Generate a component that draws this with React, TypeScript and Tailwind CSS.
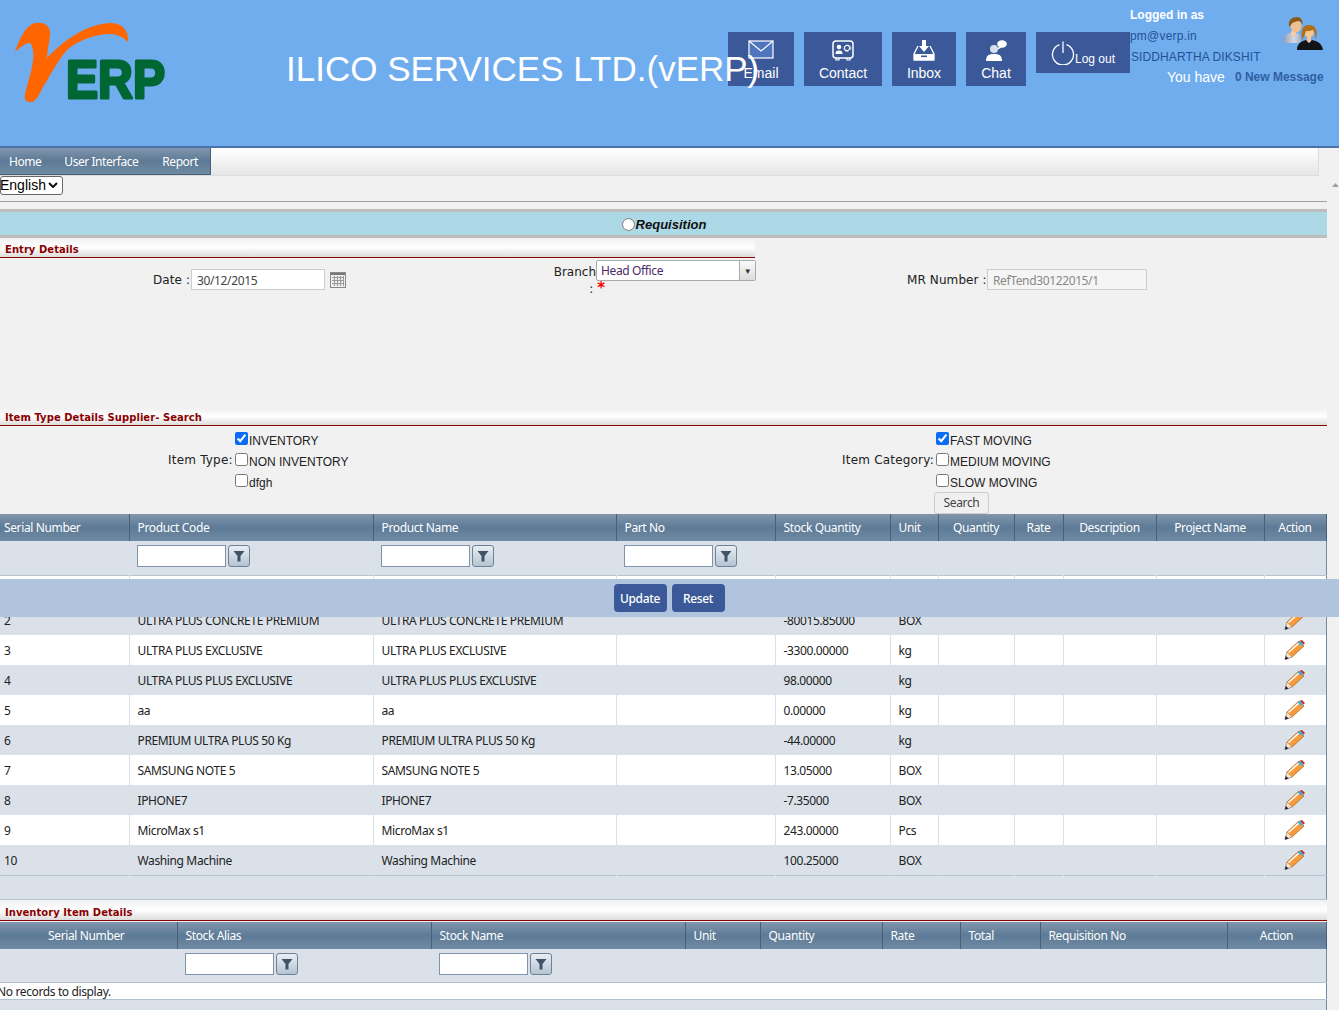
import type { ReactNode } from "react";

const rows = [
  ["1", "", "", "", ""],
  ["2", "ULTRA PLUS CONCRETE PREMIUM", "ULTRA PLUS CONCRETE PREMIUM", "-80015.85000", "BOX"],
  ["3", "ULTRA PLUS EXCLUSIVE", "ULTRA PLUS EXCLUSIVE", "-3300.00000", "kg"],
  ["4", "ULTRA PLUS PLUS EXCLUSIVE", "ULTRA PLUS PLUS EXCLUSIVE", "98.00000", "kg"],
  ["5", "aa", "aa", "0.00000", "kg"],
  ["6", "PREMIUM ULTRA PLUS 50 Kg", "PREMIUM ULTRA PLUS 50 Kg", "-44.00000", "kg"],
  ["7", "SAMSUNG NOTE 5", "SAMSUNG NOTE 5", "13.05000", "BOX"],
  ["8", "IPHONE7", "IPHONE7", "-7.35000", "BOX"],
  ["9", "MicroMax s1", "MicroMax s1", "243.00000", "Pcs"],
  ["10", "Washing Machine", "Washing Machine", "100.25000", "BOX"],
];

const topCols = [
  { label: "Serial Number", w: "w-[129px]", cls: "pl-[4px] text-left" },
  { label: "Product Code", w: "w-[244px]", cls: "pl-[8px] text-left" },
  { label: "Product Name", w: "w-[243px]", cls: "pl-[8px] text-left" },
  { label: "Part No", w: "w-[159px]", cls: "pl-[8px] text-left" },
  { label: "Stock Quantity", w: "w-[115px]", cls: "pl-[8px] text-left" },
  { label: "Unit", w: "w-[48px]", cls: "pl-[8px] text-left" },
  { label: "Quantity", w: "w-[76px]", cls: "text-center" },
  { label: "Rate", w: "w-[49px]", cls: "text-center" },
  { label: "Description", w: "w-[93px]", cls: "text-center" },
  { label: "Project Name", w: "w-[108px]", cls: "text-center" },
  { label: "Action", w: "w-[62px]", cls: "text-center" },
];

const bottomCols = [
  { label: "Serial Number", w: "w-[177px]", cls: "pr-[4px] text-center" },
  { label: "Stock Alias", w: "w-[254px]", cls: "pl-[8px] text-left" },
  { label: "Stock Name", w: "w-[254px]", cls: "pl-[8px] text-left" },
  { label: "Unit", w: "w-[75px]", cls: "pl-[8px] text-left" },
  { label: "Quantity", w: "w-[122px]", cls: "pl-[8px] text-left" },
  { label: "Rate", w: "w-[78px]", cls: "pl-[8px] text-left" },
  { label: "Total", w: "w-[80px]", cls: "pl-[8px] text-left" },
  { label: "Requisition No", w: "w-[187px]", cls: "pl-[8px] text-left" },
  { label: "Action", w: "w-[99px]", cls: "text-center" },
];

const Logo = () => (
  <svg width="156" height="92" viewBox="0 0 156 92" className="block">
    <path
      d="M1 30 C5 18 12 2 22 1 C30 0 37 3 36 14 C35 22 33 30 33 36 C46 22 70 2 96 1 C108 1 115 8 114 20 C106 12 96 11 86 13 C70 16 60 22 53 28 C44 38 36 54 29 65 C25 73 22 80 17 80 C12 80 10 78 11 72 C14 58 21 42 19 28 C18 22 16 20 14 21 C9 23 5 26 1 30Z"
      fill="#ff6600"
    />
    <text x="52" y="76" fill="#006633" stroke="#006633" strokeWidth="3" strokeLinejoin="round" fontSize="54" fontWeight="700" fontFamily="'Liberation Sans', sans-serif" textLength="99" lengthAdjust="spacingAndGlyphs">
      ERP
    </text>
  </svg>
);

const IconMail = () => (
  <svg width="26" height="20" viewBox="0 0 26 20" className="block">
    <rect x="1" y="1" width="24" height="17" fill="#4f76bd" stroke="#fff" strokeWidth="1.2" />
    <path d="M1 1 L13 11 L25 1" fill="none" stroke="#fff" strokeWidth="1.2" />
  </svg>
);

const IconContact = () => (
  <svg width="22" height="21" viewBox="0 0 22 21" className="block">
    <rect x="1" y="1" width="20" height="17" rx="3" fill="none" stroke="#fff" strokeWidth="1.5" />
    <path d="M4 18v2h3v-2M15 18v2h3v-2" fill="none" stroke="#fff" strokeWidth="1.2" />
    <circle cx="7" cy="7" r="2.3" fill="#fff" />
    <path d="M3.5 14c0-3 1.5-3.5 3.5-3.5s3.5.5 3.5 3.5z" fill="#fff" />
    <circle cx="15" cy="8" r="2.6" fill="none" stroke="#fff" />
    <path d="M17.6 8v1.5c1 .5 1.4-.5 1.2-2-.5-3-6-3.5-6.6.5-.4 3 2.5 4 4.5 3" fill="none" stroke="#fff" strokeWidth=".8" />
  </svg>
);

const IconInbox = () => (
  <svg width="22" height="21" viewBox="0 0 22 21" className="block">
    <path d="M5 6 L1 14 V20 H21 V14 L17 6" fill="none" stroke="#fff" strokeWidth="1.3" />
    <path d="M1 14 H21 V20 H1Z" fill="#fff" />
    <rect x="8" y="15.5" width="6" height="1.6" fill="#3b5998" />
    <path d="M9 0h4v6h3l-5 6-5-6h3z" fill="#fff" />
  </svg>
);

const IconChat = () => (
  <svg width="21" height="21" viewBox="0 0 21 21" className="block">
    <circle cx="8" cy="9" r="4" fill="#d8dfee" />
    <path d="M0 21c0-6 3-7 8-7s8 1 8 7z" fill="#fff" />
    <ellipse cx="16" cy="4" rx="4.8" ry="3.8" fill="#fff" />
    <path d="M13 6.5 L11 10 L15.5 7.5z" fill="#fff" />
  </svg>
);

const IconPower = () => (
  <svg width="24" height="24" viewBox="0 0 24 24" className="block">
    <path d="M8.5 3.6 A10.5 10.5 0 1 0 15.5 3.6" fill="none" stroke="#fff" strokeWidth="1.3" />
    <path d="M12 0.5 V12" stroke="#fff" strokeWidth="1.3" />
  </svg>
);

const IconUsers = () => (
  <svg width="40" height="34" viewBox="0 0 40 34" className="block">
    <defs>
      <linearGradient id="suit" x1="0" y1="0" x2="1" y2="0">
        <stop offset="0" stopColor="#8e9bb8" />
        <stop offset="0.6" stopColor="#d5d9e4" />
        <stop offset="1" stopColor="#a9b0c2" />
      </linearGradient>
    </defs>
    <g style={{ filter: "blur(0.4px)" }}>
      <path d="M0 26c0-7 3-10 8-10h5c4 0 5 3 5 10z" fill="url(#suit)" />
      <path d="M8 14h5v4l-2.5 2-2.5-2z" fill="#f3cfa4" />
      <ellipse cx="13" cy="9" rx="5.4" ry="6.4" fill="#f0c08c" />
      <path d="M6 9C5 3 9 0 14 0c4 0 6 3 5.5 8-1-2-2-4-4-4-3 1-6 1-7 3-1 1-1 3-2.5 2z" fill="#8a5a1c" />
      <path d="M14 33c0-7 5-9 9-10l3 3 3-3c5 1 10 3 11 10z" fill="#121316" />
      <path d="M24 19h4v5l-2 2-2-2z" fill="#f4c593" />
      <ellipse cx="26" cy="15" rx="4.8" ry="5.8" fill="#f3c792" />
      <path d="M19 23c-1-9 0-15 7-15s9 6 7 15c-1-4-1-8-3-10-3 1-5 1-7 1-1 3-2 6-4 9z" fill="#b06f16" />
    </g>
  </svg>
);

const IconPencil = () => (
  <svg width="22" height="20" viewBox="0 0 22 20" className="block">
    <path d="M1 19.5 L3 12 L15 1 L20 6 L8 17z" fill="#f79a3c" stroke="#a85c14" strokeWidth=".7" />
    <path d="M4.5 12.5 L15.5 2.5" stroke="#fff" strokeWidth="1.6" />
    <path d="M1 19.5 L3 12 L8 17z" fill="#f6e3c6" stroke="#888" strokeWidth=".4" />
    <path d="M1 19.5 L1.8 16 L4.5 18.4z" fill="#10104a" />
    <path d="M13.5 2.5 L16 0.5 L19.5 4 L17.5 6z" fill="#4fa6dc" />
    <path d="M16 0.5 L18 0 L21 3 L19.5 4.5z" fill="#c0321f" />
  </svg>
);

const IconFilter = () => (
  <svg width="12" height="12" viewBox="0 0 12 12" className="block">
    <path d="M0.5 1 H11.5 L7.5 6 V11.5 H4.5 V6z" fill="#3f5268" />
  </svg>
);

const IconCalendar = () => (
  <svg width="16" height="16" viewBox="0 0 16 16" className="block">
    <rect x="0.5" y="0.5" width="15" height="15" fill="#eee" stroke="#8a8a8a" />
    <rect x="1" y="1" width="14" height="2" fill="#777" />
    <path d="M2 5.5H14M2 8.5H14M2 11.5H14M4.5 4V14M7.5 4V14M10.5 4V14M13.5 4V14" stroke="#999" strokeWidth="1" />
  </svg>
);

const HeaderButton = ({ icon, label, className }: { icon: ReactNode; label: string; className: string }) => (
  <div className={`flex h-[54px] flex-col items-center bg-[#3b5998] pt-[8px] text-[14px] leading-[16px] text-white ${className}`}>
    <div className="h-[19px]">{icon}</div>
    <div className="mt-[6px]">{label}</div>
  </div>
);

const SectionTitle = ({ title, className }: { title: string; className: string }) => (
  <div
    className={`flex items-end border-b border-[#8b0000] bg-gradient-to-b from-[#f0f0f0] via-[#ffffff] to-[#dcdcdc] pl-[5px] font-['DejaVu_Sans',sans-serif] text-[10px] font-bold leading-[14px] tracking-[0.05px] text-[#8b0000] ${className}`}
  >
    {title}
  </div>
);

const CheckLine = ({ label, checked }: { label: string; checked?: boolean }) => (
  <label className="flex h-[21px] items-start text-[12px] leading-[14px] text-[#222]">
    <input type="checkbox" defaultChecked={checked} className="m-0 h-[13px] w-[13px] accent-[#0a6cf5]" />
    <span className="ml-[1px] mt-[2px]">{label}</span>
  </label>
);

const FilterBox = ({ w }: { w: string }) => (
  <div className="flex items-center gap-[2px]">
    <input className={`h-[22px] border border-[#7f93ab] bg-white ${w}`} />
    <button className="flex h-[22px] w-[22px] items-center justify-center rounded-[3px] border border-[#6d8096] bg-gradient-to-b from-[#e9eef3] to-[#b5c4d2]">
      <IconFilter />
    </button>
  </div>
);

const headCell = "border-r border-[#46607a] bg-gradient-to-b from-[#8296ad] via-[#5d7a96] to-[#6f8aa3] pt-[1px] align-middle text-[12px] font-normal text-white";

export default function App() {
  return (
    <div className="relative h-[1010px] w-[1339px] overflow-hidden bg-[#f1f1f1] font-['Noto_Sans',sans-serif] tracking-[-0.37px]">
      {/* Header */}
      <div className="flex h-[148px] border-b-2 border-[#4a74a8] bg-[#70adef] font-['Liberation_Sans',sans-serif] tracking-normal">
        <div className="w-[286px] pl-[14px] pt-[22px]">
          <Logo />
        </div>
        <div className="relative z-10 w-[442px] whitespace-nowrap pt-[48px] text-[35px] leading-[42px] text-white">
          ILICO SERVICES LTD.(vERP)
        </div>
        <div className="flex items-start gap-[10px] pt-[32px]">
          <HeaderButton icon={<IconMail />} label="Email" className="w-[66px]" />
          <HeaderButton icon={<IconContact />} label="Contact" className="w-[78px]" />
          <HeaderButton icon={<IconInbox />} label="Inbox" className="w-[64px]" />
          <HeaderButton icon={<IconChat />} label="Chat" className="w-[60px]" />
          <div className="flex h-[41px] w-[94px] items-start bg-[#3b5998] pl-[15px] pt-[9px] text-white">
            <IconPower />
            <span className="mt-[11px] text-[12px] leading-[14px]">Log out</span>
          </div>
        </div>
        <div className="relative w-[209px] pt-[8px] text-[12px] leading-[14px]">
          <div className="font-bold text-white">Logged in as</div>
          <div className="mt-[7px] tracking-[0.2px] text-[#245294]">pm@verp.in</div>
          <div className="mt-[7px] pl-[1px] tracking-[0.1px] text-[#245294]">SIDDHARTHA DIKSHIT</div>
          <div className="mt-[5px] flex items-center pl-[37px]">
            <span className="text-[14px] leading-[16px] text-white">You have</span>
            <span className="ml-[10px] font-bold text-[#2f5f9f]">0 New Message</span>
          </div>
          <div className="absolute left-[153px] top-[17px]">
            <IconUsers />
          </div>
        </div>
      </div>

      {/* Menu */}
      <div className="flex h-[28px] w-[1319px] border-b border-r border-[#dcdcdc] bg-gradient-to-b from-[#ffffff] to-[#e6e6e6] text-[12px] tracking-[-0.45px] text-white">
        <div className="flex w-[211px] items-center border-r border-b border-[#46607a] bg-gradient-to-b from-[#8296ad] via-[#5d7a96] to-[#6f8aa3] pt-[1px]">
          <span className="ml-[9px]">Home</span>
          <span className="ml-[23px]">User Interface</span>
          <span className="ml-[24px]">Report</span>
        </div>
      </div>

      {/* Language */}
      <div className="relative h-[26px] w-[1327px] border-b border-[#a0a0a0]">
        <select className="block h-[19px] w-[63px] appearance-none rounded-[3px] border border-[#666] bg-white pl-0 indent-[-1px] font-['Liberation_Sans',sans-serif] text-[14px] leading-[17px] tracking-normal text-black">
          <option>English</option>
        </select>
        <svg width="10" height="6" viewBox="0 0 10 6" className="pointer-events-none absolute left-[48px] top-[6px]">
          <path d="M1 1 L5 5 L9 1" fill="none" stroke="#111" strokeWidth="2" />
        </svg>
      </div>

      <div className="w-[1327px]">
        {/* Requisition band */}
        <div className="mt-[7px] flex h-[29px] items-center justify-center border-y-[3px] border-[#bdbdbd] bg-[#add8e6] pl-[1px] pt-[3px] font-['Liberation_Sans',sans-serif] text-[13px] font-bold italic tracking-normal text-[#111]">
          <input type="radio" className="m-0 h-[13px] w-[13px] -translate-y-[1px]" />
          <span className="ml-[1px]">Requisition</span>
        </div>

        <SectionTitle title="Entry Details" className="h-[20px] w-[755px]" />

        {/* Entry form */}
        <div className="flex h-[150px] items-start font-['DejaVu_Sans',sans-serif] text-[12px] tracking-[0.1px] text-[#222]">
          <div className="flex w-[553px] items-center pl-[153px] pt-[11px]">
            <span className="w-[38px] whitespace-nowrap">Date :</span>
            <input defaultValue="30/12/2015" className="h-[21px] w-[134px] border border-[#ccc] bg-white px-[5px] pt-[1px] font-['Noto_Sans',sans-serif] text-[12px] tracking-[-0.37px] text-[#444]" />
            <div className="ml-[5px]">
              <IconCalendar />
            </div>
          </div>
          <div className="flex w-[354px] items-start">
            <div className="w-[43px] whitespace-nowrap pt-[6px] text-right leading-[16px] tracking-normal">
              Branch
              <div className="-mr-[9px] text-right leading-[16px]">
                : <span className="text-[15px] font-bold text-[#ff0000]">*</span>
              </div>
            </div>
            <div className="mt-[2px] flex h-[21px] w-[160px] items-center justify-between rounded-[2px] border border-[#aaa] bg-white pl-[4px] font-['Noto_Sans',sans-serif] text-[12px] tracking-[-0.37px] text-[#4b2a6a]">
              Head Office
              <span className="flex h-full w-[16px] items-center justify-center border-l border-[#aaa] bg-gradient-to-b from-[#fafafa] to-[#dcdcdc] text-[8px] text-[#333]">▼</span>
            </div>
          </div>
          <div className="flex items-center pt-[11px]">
            <span className="w-[80px] whitespace-nowrap">MR Number :</span>
            <input defaultValue="RefTend30122015/1" className="h-[21px] w-[160px] border border-[#ccc] bg-[#f5f5f5] px-[5px] pt-[1px] font-['Noto_Sans',sans-serif] text-[12px] tracking-[-0.37px] text-[#888]" />
          </div>
        </div>

        <SectionTitle title="Item Type Details Supplier- Search" className="h-[18px]" />

        {/* Item filters */}
        <div className="flex h-[88px] items-start font-['Liberation_Sans',sans-serif] tracking-normal">
          <div className="flex w-[842px] items-start pl-[168px] pt-[6px]">
            <span className="w-[67px] whitespace-nowrap pt-[19px] font-['DejaVu_Sans',sans-serif] text-[12px] tracking-[0.2px] text-[#222]">Item Type:</span>
            <div>
              <CheckLine label="INVENTORY" checked />
              <CheckLine label="NON INVENTORY" />
              <CheckLine label="dfgh" />
            </div>
          </div>
          <div className="flex items-start pt-[6px]">
            <span className="w-[94px] whitespace-nowrap pt-[19px] font-['DejaVu_Sans',sans-serif] text-[12px] tracking-[0.2px] text-[#222]">Item Category:</span>
            <div>
              <CheckLine label="FAST MOVING" checked />
              <CheckLine label="MEDIUM MOVING" />
              <CheckLine label="SLOW MOVING" />
              <button className="-ml-[2px] -mt-[3px] block h-[22px] w-[55px] rounded-[3px] border border-[#ccc] bg-[#f0f0f0] font-['Noto_Sans',sans-serif] text-[12px] tracking-[-0.37px] text-[#444]">Search</button>
            </div>
          </div>
        </div>

        {/* Items grid */}
        <table className="w-[1326px] table-fixed border-collapse border-r border-[#6f8aa3] text-[12px] text-[#222]">
          <thead>
            <tr className="h-[27px]">
              {topCols.map((c) => (
                <th key={c.label} className={`${headCell} ${c.w} ${c.cls}`}>
                  {c.label}
                </th>
              ))}
            </tr>
          </thead>
          <tbody>
            <tr className="h-[34px] border-b border-[#b5c2d0] bg-[#dae1e8]">
              <td />
              <td className="pl-[8px] pt-[4px] align-top"><FilterBox w="w-[89px]" /></td>
              <td className="pl-[8px] pt-[4px] align-top"><FilterBox w="w-[89px]" /></td>
              <td className="pl-[8px] pt-[4px] align-top"><FilterBox w="w-[89px]" /></td>
              <td colSpan={7} />
            </tr>
            {rows.map((r, i) => (
              <tr key={r[0]} className={`h-[30px] ${i % 2 === 1 ? "bg-[#dae1e8]" : "bg-white"}`}>
                <td className="border-r border-[#dae1e8] pl-[4px] pt-[2px]">{r[0]}</td>
                <td className="border-r border-[#dae1e8] pl-[8px] pt-[2px]">{r[1]}</td>
                <td className="border-r border-[#dae1e8] pl-[8px] pt-[2px]">{r[2]}</td>
                <td className="border-r border-[#dae1e8]" />
                <td className="border-r border-[#dae1e8] pl-[8px] pt-[2px]">{r[3]}</td>
                <td className="border-r border-[#dae1e8] pl-[8px] pt-[2px]">{r[4]}</td>
                <td className="border-r border-[#dae1e8]" />
                <td className="border-r border-[#dae1e8]" />
                <td className="border-r border-[#dae1e8]" />
                <td className="border-r border-[#dae1e8]" />
                <td>
                  <div className="flex justify-center">
                    <IconPencil />
                  </div>
                </td>
              </tr>
            ))}
            <tr className="h-[24px] border-y border-[#b5c2d0] bg-[#dae1e8]">
              <td colSpan={11} />
            </tr>
          </tbody>
        </table>

        <SectionTitle title="Inventory Item Details" className="mb-[1px] h-[21px]" />

        {/* Inventory grid */}
        <table className="w-[1326px] table-fixed border-collapse border-r border-[#6f8aa3] text-[12px] text-[#222]">
          <thead>
            <tr className="h-[27px]">
              {bottomCols.map((c) => (
                <th key={c.label} className={`${headCell} ${c.w} ${c.cls}`}>
                  {c.label}
                </th>
              ))}
            </tr>
          </thead>
          <tbody>
            <tr className="h-[34px] border-b border-[#b5c2d0] bg-[#dae1e8]">
              <td />
              <td className="pl-[8px] pt-[4px] align-top"><FilterBox w="w-[89px]" /></td>
              <td className="pl-[8px] pt-[4px] align-top"><FilterBox w="w-[89px]" /></td>
              <td colSpan={6} />
            </tr>
            <tr className="h-[16px] border-b border-[#b5c2d0] bg-white">
              <td colSpan={9} className="-translate-x-[3px] whitespace-nowrap pt-[1px] leading-[15px]">No records to display.</td>
            </tr>
            <tr className="h-[20px] bg-[#dae1e8]">
              <td colSpan={9} />
            </tr>
          </tbody>
        </table>
      </div>

      {/* Sticky action bar */}
      <div className="absolute left-0 top-[579px] flex h-[38px] w-[1339px] items-center justify-center gap-[5px] bg-[#b0c4de] pr-[1px] text-[12px] font-medium text-white">
        <button className="h-[28px] w-[53px] rounded-[4px] bg-[#3b5998] pt-[1px]">Update</button>
        <button className="h-[28px] w-[53px] rounded-[4px] bg-[#3b5998] pt-[1px]">Reset</button>
      </div>

      {/* Scroll arrow */}
      <svg width="7" height="4" viewBox="0 0 7 4" className="absolute left-[1332px] top-[183px]">
        <path d="M0 4 L3.5 0 L7 4z" fill="#a0a0a0" />
      </svg>
    </div>
  );
}
